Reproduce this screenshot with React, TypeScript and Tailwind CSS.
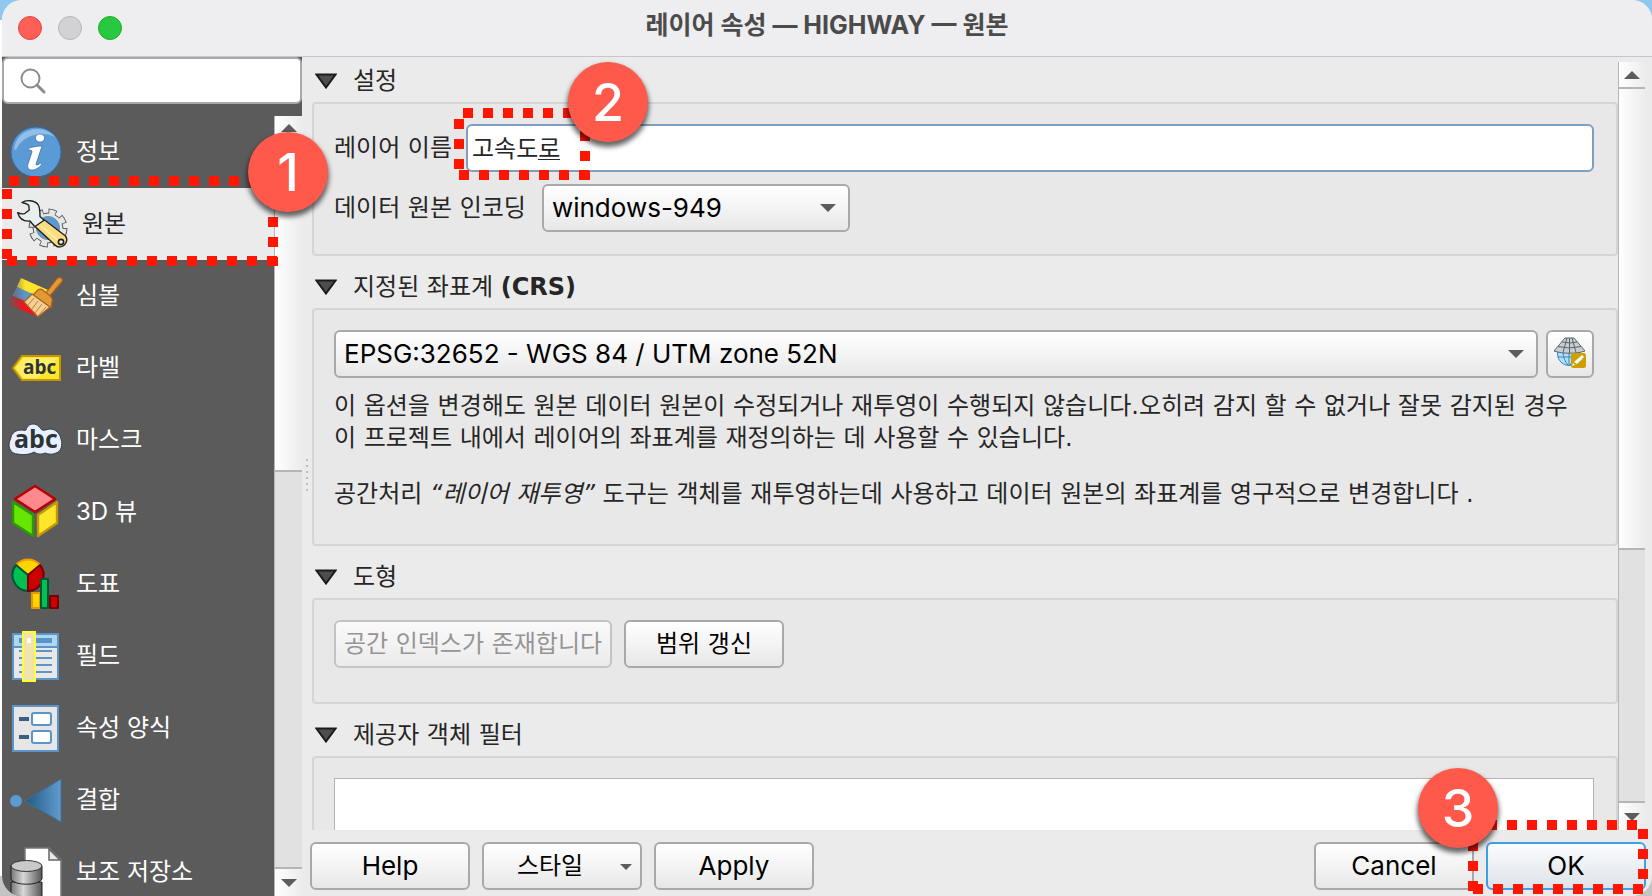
import type { ReactNode } from 'react';

const button =
  'h-12 rounded-md border-2 border-[#a9a9a9] bg-gradient-to-b from-white to-[#e8e8e8] text-black';

const korean = "font-['DejaVu_Sans','Noto_Sans_CJK_KR',sans-serif]";

function DownArrow({ className = '' }: { className?: string }) {
  return (
    <svg viewBox="0 0 16 8" className={'pointer-events-none h-2 w-4 ' + className} aria-hidden="true">
      <path d="M0 0h16L8 8z" fill="#5c5c5c" />
    </svg>
  );
}

function InfoIcon() {
  return (
    <svg viewBox="0 0 54 54" className="size-full">
      <circle cx="27" cy="27" r="25" fill="#5b9bd5" stroke="#2f6cb0" strokeWidth="1" />
      <path d="M5 24C7 10 18 4 28 4c10 0 16 5 18 8C36 6 14 8 7 25z" fill="#a9cdee" opacity=".7" />
      <ellipse cx="31" cy="13" rx="4.6" ry="4" fill="#fff" stroke="#2a5d99" strokeWidth=".6" />
      <path d="M20 23c4-1 8-2 13-2l-6 18c0 2 2 1 5-1l1 1c-3 4-7 6-10 6-4 0-5-3-4-6l4-12c0-2-1-2-4-2z" fill="#fff" stroke="#2a5d99" strokeWidth=".6" />
    </svg>
  );
}

function SourceIcon() {
  return (
    <svg viewBox="0 0 54 54" className="size-full" strokeLinejoin="round">
      <g transform="translate(33 31)">
        <circle r="17" fill="none" stroke="#555" strokeWidth="5" strokeDasharray="8 5.350" />
        <circle r="15" fill="#e3e7e8" stroke="#555" strokeWidth="1" />
        <circle r="16" fill="none" stroke="#e3e7e8" strokeWidth="5" strokeDasharray="6 6.566" strokeDashoffset="-.8" />
        <circle r="11.500" fill="#5b9bd5" stroke="#888" />
      </g>
      <path
        d="M7 5.500C9 4 12 3.500 15 3.700c4 .3 7 2 8.300 4.300C25 11 25 14 25 19.500l5 4.500-10 6-5-6c-5 .5-10-.5-12.300-8.300 2 1 5 1.600 7.300.6l4.300-3.300-.6-4.700C12 6.500 9 6 7 5.500z"
        fill="#e9eeee"
        stroke="#222"
        strokeWidth="1.400"
      />
      <path d="M20 29.500l9.500-6.500 21 16c3 4 0 11-6.500 11-2 0-3-1-4-2z" fill="#fbdc7e" stroke="#222" strokeWidth="1.400" />
      <path d="M26 29l18 15" stroke="#fff1b8" strokeWidth="1.500" />
      <circle cx="46" cy="45" r="2.600" fill="#eee" stroke="#222" strokeWidth="1.600" />
    </svg>
  );
}

function SymbologyIcon() {
  return (
    <svg viewBox="0 0 54 54" className="size-full">
      <defs>
        <linearGradient id="fade" x1="0" x2="1">
          <stop offset="0" stopColor="#5b5b5b" stopOpacity=".8" />
          <stop offset=".4" stopColor="#5b5b5b" stopOpacity="0" />
        </linearGradient>
      </defs>
      <path d="M12 9l27 12-3 11L8 18z" fill="#fee42c" />
      <path d="M8 18l27 12-5 10L4 27z" fill="#5f97c8" />
      <path d="M4 27l29 12-4 9L1 36z" fill="#f8101c" />
      <path d="M12 9l27 12-10 27L1 36z" fill="url(#fade)" />
      <path d="M36 25l11-14c2-3 5-3 6-1 1 1 0 3-2 5L40 28z" fill="#e39a36" stroke="#a7611a" strokeWidth="1.2" />
      <path d="M28 22c2-3 5-2 7 0l5 4c3 2 4 4 3 7l-1 6-18-13z" fill="#e39a36" stroke="#a7611a" strokeWidth="1.2" />
      <path d="M23 25l18 13-12 10-14-15z" fill="#f4cf92" stroke="#a7611a" strokeWidth="1.2" />
      <path d="M25 29l-6 7M29 32l-6 8M33 35l-7 9M37 38l-8 9" stroke="#b98243" strokeWidth="1" />
    </svg>
  );
}

function LabelIcon() {
  return (
    <svg viewBox="0 0 54 54" className="size-full">
      <path d="M4 27l9-12h38v24H13z" fill="#fee52e" stroke="#c59700" strokeWidth="2" />
      <path d="M7 27l7-10h35L28 37H14z" fill="#fff48d" opacity=".6" />
      <text x="14" y="33" fontFamily="Open Sans" fontWeight="700" fontSize="19" fill="#2e3436">abc</text>
    </svg>
  );
}

function MaskIcon() {
  return (
    <svg viewBox="0 0 54 54" className="size-full overflow-visible">
      <path d="M8 41c-4 0-8-4-8-9 0-4 2-6 2-8 1-4 5-7 10-7 2 0 3 1 5 0 1-4 4-6 7-6 5 0 7 4 9 6 3 1 5-1 8-1 6 0 10 5 11 10 2 6 0 13-5 14-4 2-8 1-11 0-4 2-8 1-11-1-5 3-11 3-17 2z" fill="#e8efff" stroke="#333d49" strokeWidth="1" />
      <text x="5" y="35" fontFamily="Open Sans" fontWeight="700" fontSize="25" fill="#2e3436">abc</text>
    </svg>
  );
}

function CubeIcon() {
  return (
    <svg viewBox="0 0 54 54" className="size-full overflow-visible" strokeLinejoin="round">
      <path d="M26 1l20 13-20 13L6 14z" fill="#ff8a8d" stroke="#b80005" strokeWidth="2.4" />
      <path d="M4 17l20 13v21L4 38z" fill="#66e600" stroke="#2c9a06" strokeWidth="2.4" />
      <path d="M48 17L29 30v21l19-13z" fill="#ffe62b" stroke="#c59a00" strokeWidth="2.4" />
    </svg>
  );
}

function DiagramIcon() {
  return (
    <svg viewBox="0 0 54 54" className="size-full" strokeLinejoin="round">
      <path d="M19 18L7 8a16 16 0 0 1 24 0z" fill="#ffd500" stroke="#f29a00" strokeWidth="2" />
      <path d="M19 18v16A16 16 0 0 1 7 8z" fill="#00c050" stroke="#00543a" strokeWidth="2" />
      <path d="M19 18v16A16 16 0 0 0 31 8z" fill="#cc0000" stroke="#780000" strokeWidth="2" />
      <path d="M23 36h8v15h-8z" fill="#ffd500" stroke="#e89600" strokeWidth="2" />
      <path d="M41 39h8v12h-8z" fill="#cc0000" stroke="#780000" strokeWidth="2" />
      <path d="M32 22h7v29h-7z" fill="#00c050" stroke="#00543a" strokeWidth="2" />
    </svg>
  );
}

function FieldsIcon() {
  return (
    <svg viewBox="0 0 54 54" className="size-full overflow-visible">
      <path d="M4 5h45v45H4z" fill="#e8e8e8" stroke="#5b94c8" strokeWidth="2" />
      <path d="M5 6h43v11H5z" fill="#add8ee" />
      <path d="M4 18h45M10 22h33M10 29h33M10 36h33M10 43h33" stroke="#5b94c8" strokeWidth="2" />
      <path d="M10 9h33v5H10z" fill="#5b94c8" />
      <path d="M14 3h12v49H14z" fill="#f1e3b0" stroke="#ffff32" strokeWidth="2" />
      <path d="M18 9h4v5h-4z" fill="#fff" />
    </svg>
  );
}

function FormIcon() {
  return (
    <svg viewBox="0 0 54 54" className="size-full">
      <path d="M4 5h45v45H4z" fill="#e6e6e6" stroke="#5b94c8" strokeWidth="2" />
      <rect x="23" y="12" width="19" height="12" rx="2" fill="#fff" stroke="#5b94c8" strokeWidth="2" />
      <rect x="23" y="30" width="19" height="12" rx="2" fill="#fff" stroke="#5b94c8" strokeWidth="2" />
      <path d="M10 18h10M10 36h10" stroke="#3c5f7e" strokeWidth="4" />
    </svg>
  );
}

function JoinIcon() {
  return (
    <svg viewBox="0 0 54 54" className="size-full">
      <defs>
        <linearGradient id="join" x1="0" x2="1">
          <stop offset="0" stopColor="#1f5884" />
          <stop offset="1" stopColor="#629cce" />
        </linearGradient>
      </defs>
      <circle cx="7" cy="28" r="6" fill="#5b9bd0" />
      <path d="M16 28L52 6v43z" fill="url(#join)" stroke="#3a71a0" strokeWidth="1" />
    </svg>
  );
}

function StorageIcon() {
  return (
    <svg viewBox="0 0 54 54" className="size-full overflow-visible">
      <defs>
        <linearGradient id="drum" x1="0" x2="1">
          <stop offset="0" stopColor="#777" />
          <stop offset=".4" stopColor="#d8d8d8" />
          <stop offset="1" stopColor="#555" />
        </linearGradient>
      </defs>
      <path d="M16 3h24l12 12v45H16z" fill="#fff" stroke="#777" strokeWidth="1.5" />
      <path d="M40 4v11h11z" fill="#e8e8e8" stroke="#666" strokeWidth="1.5" />
      <path d="M2 37v18h31V37z" fill="url(#drum)" stroke="#222" />
      <path d="M2 21v13c3 7 28 7 31 0V21z" fill="url(#drum)" stroke="#222" />
      <ellipse cx="17.500" cy="21" rx="15.500" ry="5.500" fill="#c9c9c9" stroke="#333" />
    </svg>
  );
}

function GlobeIcon() {
  return (
    <svg viewBox="0 0 32 32" className="size-8">
      <circle cx="15" cy="17" r="11.500" fill="#b3e1fb" stroke="#3283c4" />
      <path d="M4 20h22M15 14v14M9 14c0 6 2 11 5 14M21 14c0 6-2 11-5 14" fill="none" stroke="#3283c4" />
      <path d="M11 1h9l11 13c-9 3-22 3-31 0z" fill="#c7cfd5" stroke="#5c6468" />
      <path d="M8 5q8 2 15 0M4 9.500q11 3 23 0M13 1L9 15.500M18 1l4 14.500M15.500 1v15" fill="none" stroke="#5c6468" />
      <rect x="17" y="16" width="15" height="15" rx="2.500" fill="#cf9f00" />
      <path d="M28 18l2 2-7 7-3-2zM19 26l2 2-3 1z" fill="#fff" />
    </svg>
  );
}

const pages = [
  { label: '정보', icon: <InfoIcon /> },
  { label: '원본', icon: <SourceIcon />, current: true },
  { label: '심볼', icon: <SymbologyIcon /> },
  { label: '라벨', icon: <LabelIcon /> },
  { label: '마스크', icon: <MaskIcon /> },
  { label: '3D 뷰', icon: <CubeIcon /> },
  { label: '도표', icon: <DiagramIcon /> },
  { label: '필드', icon: <FieldsIcon /> },
  { label: '속성 양식', icon: <FormIcon /> },
  { label: '결합', icon: <JoinIcon /> },
  { label: '보조 저장소', icon: <StorageIcon /> },
];

function Section({ title, children, className }: { title: ReactNode; children: ReactNode; className: string }) {
  return (
    <section className="mb-[7px] shrink-0">
      <h2 className={'flex h-[45px] items-center pt-0.5 text-[#262626] ' + korean}>
        <button type="button" className="flex items-center gap-4 pl-[3px]">
          <svg viewBox="0 0 22 16" className="h-4 w-[22px]" aria-hidden="true">
            <path d="M1.500 1.500h19L11 14.500z" fill="#4d4d4d" stroke="#1c1c1c" strokeWidth="2" />
          </svg>
          <span>{title}</span>
        </button>
      </h2>
      <div className={'rounded-sm border-2 border-[#d5d5d5] bg-[#e8e8e8] pt-5 pr-[22px] pl-5 ' + className}>{children}</div>
    </section>
  );
}

function Badge({ n, className }: { n: number; className: string }) {
  return (
    <div
      className={
        'absolute flex size-20 items-center justify-center rounded-full bg-[#ff594c] pt-0.5 text-[52px] leading-none font-medium text-white shadow-[0_4px_5px_1px_rgba(0,0,0,0.6)] ' +
        className
      }
    >
      {n}
    </div>
  );
}

function Dots({ w, h, lines, className }: { w: number; h: number; lines: string; className: string }) {
  return (
    <svg viewBox={`0 0 ${w} ${h}`} width={w} height={h} className={'absolute ' + className} aria-hidden="true">
      <path d={lines} fill="none" stroke="#ff1500" strokeWidth="10" strokeDasharray="10 10" />
    </svg>
  );
}

export default function App() {
  return (
    <div className="relative h-screen overflow-hidden bg-[linear-gradient(#8ec8f0_0_20px,#fff_20px,#fff_calc(100%-20px),#c4c4c4_calc(100%-20px))] pl-0.5 font-[Inter,'Noto_Sans_CJK_KR',sans-serif] text-2xl">
      <div className="flex h-full flex-col overflow-hidden rounded-[20px] bg-[#ebebeb]">
        <header className="relative flex h-[57px] shrink-0 items-center justify-center border-b border-[#c6c6c6] bg-[#eeeef0]">
          <div className="absolute top-4 left-4 flex gap-4">
            <button type="button" aria-label="닫기" className="size-6 rounded-full border border-[#e2463f] bg-[#ff5f57]" />
            <button type="button" aria-label="최소화" className="size-6 rounded-full border border-[#b5b5b7] bg-[#d2d2d4]" />
            <button type="button" aria-label="확대" className="size-6 rounded-full border border-[#1dad2b] bg-[#28c840]" />
          </div>
          <h1 className="pb-1 text-[25px] font-bold text-[#4b4b4b]">레이어 속성 — HIGHWAY — 원본</h1>
        </header>

        <div className="flex min-h-0 flex-1">
          <aside className="flex w-[300px] shrink-0 flex-col bg-[#5b5b5b]">
            <label className="flex h-[47px] shrink-0 items-center rounded-md border-2 border-[#a9a9a9] bg-white pl-4">
              <svg viewBox="0 0 26 26" className="size-[26px] shrink-0" fill="none" stroke="#8c8c8c" strokeWidth="2">
                <circle cx="10.500" cy="10.500" r="9" />
                <path d="M17 17l7 7" strokeWidth="3" strokeLinecap="round" />
              </svg>
              <input type="search" aria-label="검색" className="min-w-0 flex-1 bg-transparent px-2 outline-none" />
            </label>
            <div className="mt-3 flex min-h-0 flex-1">
              <nav className="min-w-0 flex-1 overflow-hidden">
                {pages.map((p) => (
                  <a
                    key={p.label}
                    href="#"
                    className={
                      p.current
                        ? 'flex h-[72px] items-center gap-[13px] bg-[#ebebeb] pl-[13px] text-[#262626]'
                        : 'flex h-[72px] items-center gap-[13px] pl-[7px] text-white'
                    }
                  >
                    <span className="size-[54px] shrink-0">{p.icon}</span>
                    {p.label}
                  </a>
                ))}
              </nav>
              <div className="flex w-7 shrink-0 flex-col border-l border-[#b5b5b5] bg-[#e1e1e1]">
                <div className="flex h-[356px] shrink-0 justify-center border-b-2 border-[#b5b5b5] bg-gradient-to-r from-white to-[#ececec] pt-2">
                  <DownArrow className="rotate-180" />
                </div>
                <div className="flex-1" />
                <div className="flex h-[29px] items-center justify-center border-t-2 border-[#b5b5b5] bg-gradient-to-r from-white to-[#ececec]">
                  <DownArrow />
                </div>
              </div>
            </div>
          </aside>

          <div className="flex w-2.5 shrink-0 flex-col items-center justify-center pb-1">
            <div className="h-8 w-0.5 bg-[repeating-linear-gradient(#bdbdbd_0_2px,transparent_2px_6px)]" />
          </div>

          <div className="flex min-w-0 flex-1 flex-col">
            <div className="flex min-h-0 flex-1 pr-[7px]">
              <main className="flex min-w-0 flex-1 flex-col overflow-hidden">
                <Section title="설정" className="pb-[22px]">
                  <div className="flex items-center text-[#262626]">
                    <label htmlFor="layer-name" className={'mr-3.5 shrink-0 ' + korean}>레이어 이름</label>
                    <div className="relative flex-1">
                      <input
                        id="layer-name"
                        defaultValue="고속도로"
                        className="block h-12 w-full rounded-md border-2 border-[#7e9fc0] bg-white pb-1 pl-1 outline-none"
                      />
                      <span className="absolute top-[35px] left-[72px] h-px w-[22px] bg-[#262626]" />
                    </div>
                  </div>
                  <div className="mt-3 flex items-center gap-4 text-[#262626]">
                    <label htmlFor="encoding" className={korean}>데이터 원본 인코딩</label>
                    <div className="relative w-[308px]">
                      <select id="encoding" className={'w-full appearance-none pl-2 text-[26px] ' + button}>
                        <option>windows-949</option>
                      </select>
                      <DownArrow className="absolute top-5 right-3.5" />
                    </div>
                  </div>
                </Section>

                <Section title={<>지정된 좌표계 <b>(CRS)</b></>} className="pb-[34px]">
                  <div className="flex gap-2">
                    <div className="relative min-w-0 flex-1">
                      <select aria-label="좌표계" className={'w-full appearance-none pl-2 text-[26px] ' + button}>
                        <option>EPSG:32652 - WGS 84 / UTM zone 52N</option>
                      </select>
                      <DownArrow className="absolute top-5 right-3.5" />
                    </div>
                    <button type="button" aria-label="좌표계 선택" className={'flex w-12 items-center justify-center pb-0.5 ' + button}>
                      <GlobeIcon />
                    </button>
                  </div>
                  <div className={'mt-3 leading-8 text-[#262626] ' + korean}>
                    <p>
                      이 옵션을 변경해도 원본 데이터 원본이 수정되거나 재투영이 수행되지 않습니다.오히려 감지 할 수 없거나 잘못 감지된 경우
                      <br />이 프로젝트 내에서 레이어의 좌표계를 재정의하는 데 사용할 수 있습니다.
                    </p>
                    <p className="mt-6">
                      공간처리 <i>“레이어 재투영”</i> 도구는 객체를 재투영하는데 사용하고 데이터 원본의 좌표계를 영구적으로 변경합니다 .
                    </p>
                  </div>
                </Section>

                <Section title="도형" className="pb-[34px]">
                  <div className={'flex gap-3 ' + korean}>
                    <button type="button" disabled className="h-12 w-[278px] rounded-md border-2 border-[#c3c3c3] bg-gradient-to-b from-[#fafafa] to-[#ebebeb] whitespace-nowrap text-[#959595]">
                      공간 인덱스가 존재합니다
                    </button>
                    <button type="button" className={'w-40 ' + button}>범위 갱신</button>
                  </div>
                </Section>

                <Section title="제공자 객체 필터" className="pb-5">
                  <textarea aria-label="제공자 객체 필터" className="block h-40 w-full resize-none border border-[#b5b5b5] bg-white outline-none" />
                </Section>
              </main>
              <div className="mt-[5px] flex w-[27px] shrink-0 flex-col border-l border-[#b5b5b5] bg-[#e1e1e1]">
                <div className="flex h-[27px] items-center justify-center border-b-2 border-[#b5b5b5] bg-gradient-to-r from-white to-[#ececec]">
                  <DownArrow className="rotate-180" />
                </div>
                <div className="h-[461px] border-b-2 border-[#b5b5b5] bg-gradient-to-r from-white to-[#ececec]" />
                <div className="flex-1" />
                <div className="flex h-[29px] items-center justify-center border-t-2 border-[#b5b5b5] bg-gradient-to-r from-white to-[#ececec]">
                  <DownArrow />
                </div>
              </div>
            </div>

            <footer className="flex h-[66px] shrink-0 items-start gap-3 pt-3 pr-1.5">
              <button type="button" className={'-ml-0.5 w-40 text-[26px] ' + button}>Help</button>
              <button type="button" className={'relative w-40 pr-6 ' + button}>
                스타일
                <svg viewBox="0 0 12 6" className="absolute top-5 right-2 h-1.5 w-3" aria-hidden="true">
                  <path d="M0 0h12L6 6z" fill="#5c5c5c" />
                </svg>
              </button>
              <button type="button" className={'w-40 text-[26px] ' + button}>Apply</button>
              <div className="flex-1" />
              <button type="button" className={'w-40 text-[26px] ' + button}>Cancel</button>
              <button type="button" className="h-12 w-40 rounded-md border-2 border-[#3d9fe8] bg-gradient-to-b from-[#fbfcfe] to-[#dde3ea] text-[26px] text-black">
                OK
              </button>
            </footer>
          </div>
        </div>
      </div>

      <div className="pointer-events-none absolute inset-0">
        <Dots w={276} h={90} className="top-[176px] left-[2px]" lines="M7 5H267M5 13V83M5 85H276M271 21V90" />
        <Badge n={1} className="top-[132px] left-[248px]" />
        <Dots w={136} h={72} className="top-[108px] left-[454px]" lines="M9 5H119M5 11V62M5 67H136M131 3V72" />
        <Badge n={2} className="top-[62px] left-[568px]" />
        <Dots w={180} h={74} className="right-[4px] bottom-[2px]" lines="M19 5H170M175 9V60M5 69H176M5 1V72" />
        <Badge n={3} className="right-[154px] bottom-[48px]" />
      </div>
    </div>
  );
}
